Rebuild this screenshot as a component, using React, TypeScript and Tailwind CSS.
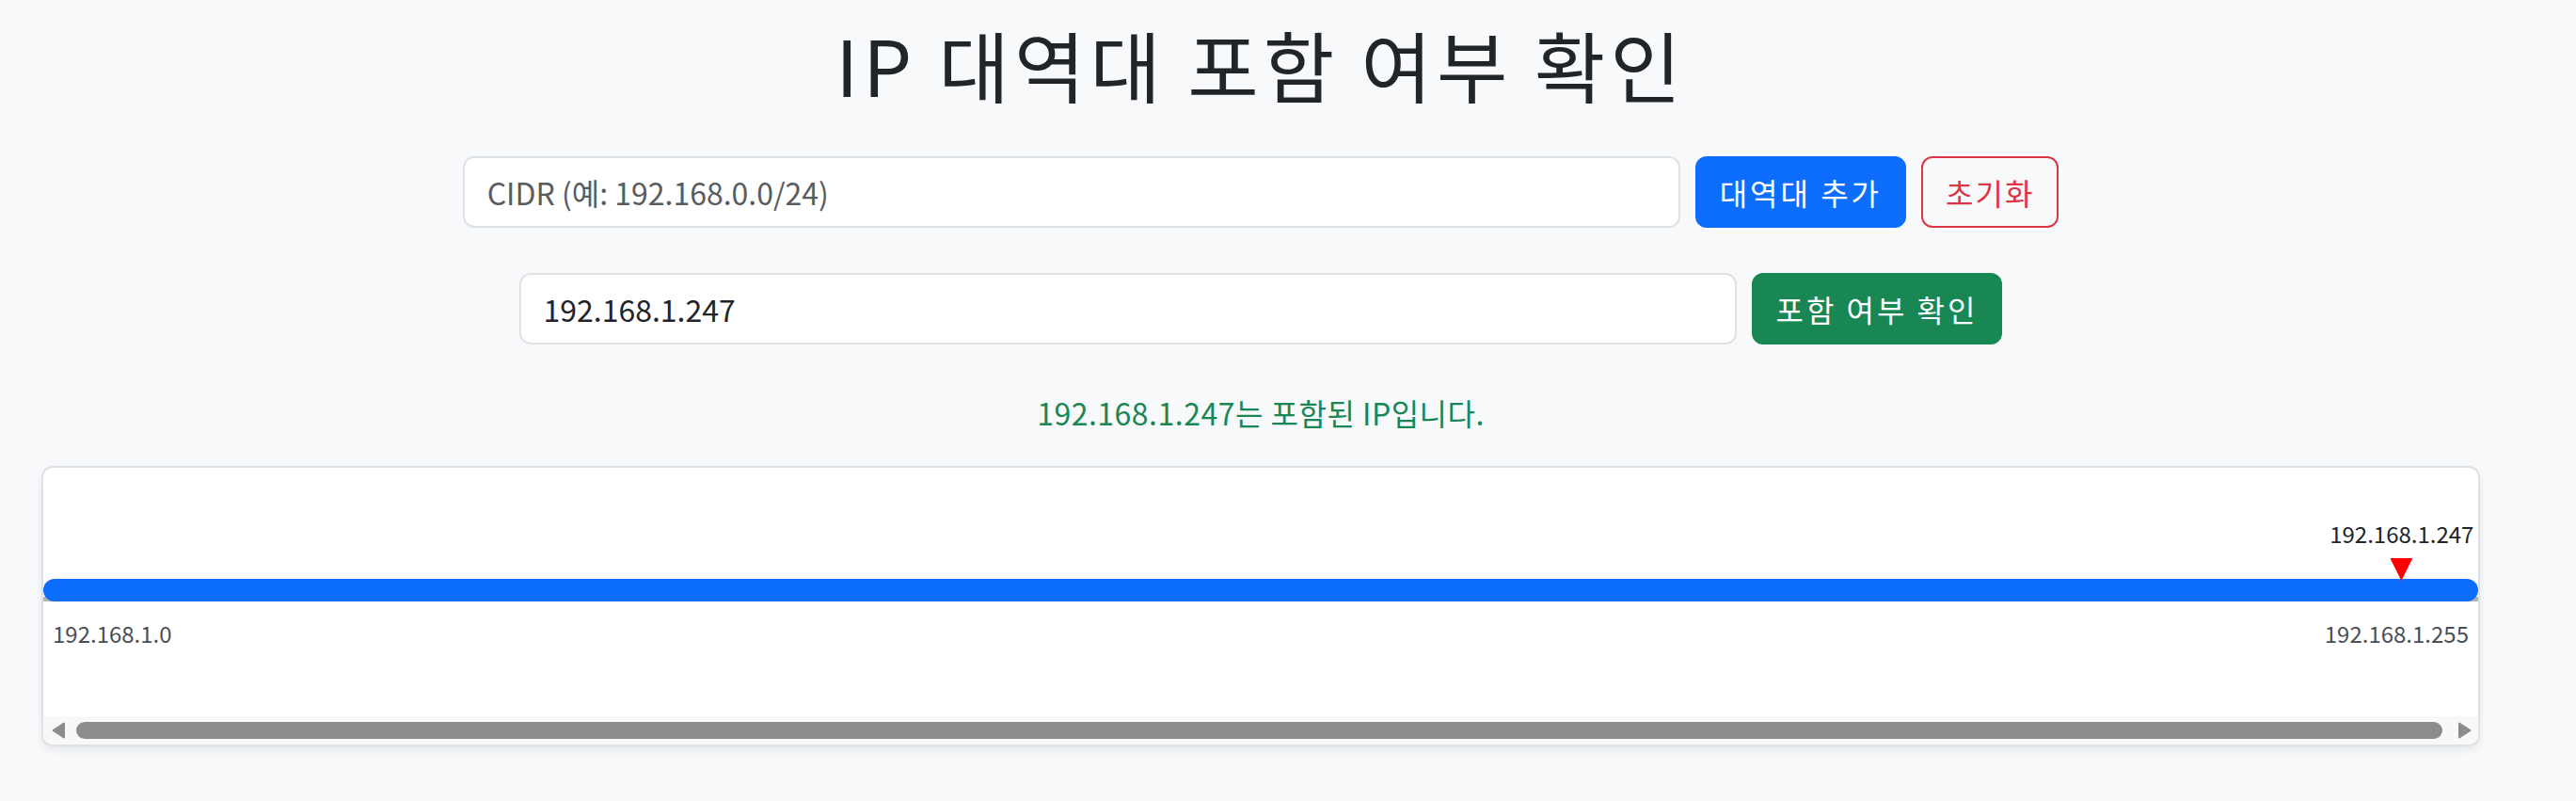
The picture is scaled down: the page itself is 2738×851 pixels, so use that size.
import { useState } from "react";

const RANGE_START = "192.168.1.0";
const RANGE_END = "192.168.1.255";
const CHECKED_IP = "192.168.1.247";

export default function App() {
  const [cidr, setCidr] = useState("");
  const [ip, setIp] = useState(CHECKED_IP);

  // position of the checked address inside the /24 range
  const lastOctet = Number(ip.split(".")[3] ?? 0);
  const pct = (lastOctet / 255) * 100;

  return (
    <div className="min-h-[851px] bg-[#f8f9fa] text-[#212529] font-['Noto_Sans_CJK_KR',sans-serif]">
      <div className="w-[2680px] px-[44px] pt-[20px]">
        <h1 className="text-center text-[82px] leading-[96px] font-normal tracking-[5px] mb-[50px]">IP 대역대 포함 여부 확인</h1>

        <div className="flex justify-center gap-4 mb-[48px]">
          <input
            value={cidr}
            onChange={(e) => setCidr(e.target.value)}
            placeholder="CIDR (예: 192.168.0.0/24)"
            className="w-[1294px] bg-white border-2 border-[#dee2e6] rounded-[12px] px-6 py-3 text-[32px] leading-[48px] outline-none placeholder:text-[#595c5f]"
          />
          <button className="bg-[#0d6efd] border-2 border-[#0d6efd] text-white rounded-[12px] px-6 py-3 text-[32px] leading-[48px] tracking-[3px]">
            대역대 추가
          </button>
          <button className="border-2 border-[#dc3545] text-[#dc3545] rounded-[12px] px-6 py-3 text-[32px] leading-[48px] tracking-[2px]">
            초기화
          </button>
        </div>

        <div className="flex justify-center gap-4 mb-[48px]">
          <input
            value={ip}
            onChange={(e) => setIp(e.target.value)}
            className="w-[1294px] bg-white border-2 border-[#dee2e6] rounded-[12px] px-6 py-3 text-[32px] leading-[48px] outline-none"
          />
          <button className="bg-[#198754] border-2 border-[#198754] text-white rounded-[12px] px-6 py-3 text-[32px] leading-[48px] tracking-[3px]">
            포함 여부 확인
          </button>
        </div>

        <p className="text-center text-[32px] leading-[48px] tracking-[0.5px] text-[#198754] mb-[33px]">{ip}는 포함된 IP입니다.</p>

        <div className="bg-white border-2 border-[#dee2e6] rounded-[12px] shadow-[0_4px_8px_rgba(0,0,0,0.075)] overflow-hidden">
          <div className="pt-[118px]">
            <div className="relative h-[24px]">
              <div className="absolute left-0 right-0 bottom-0 h-[5px] bg-[#b4b4b4]" />
              <div className="absolute inset-0 rounded-full bg-[#0d6efd]" />
              <div className="absolute bottom-[22px] -translate-x-1/2 flex flex-col items-center" style={{ left: `${pct}%` }}>
                <span className="text-[24px] leading-[32px] whitespace-nowrap">{ip}</span>
                <svg width="24" height="24" viewBox="0 0 24 24" className="mt-[10px]">
                  <path d="M0 0H24L12 24Z" fill="#ff0000" />
                </svg>
              </div>
            </div>
            <div className="flex justify-between px-[10px] mt-[18px] text-[24px] leading-[32px] text-[#4a4f55]">
              <span>{RANGE_START}</span>
              <span>{RANGE_END}</span>
            </div>
          </div>

          {/* horizontal scrollbar of the range view */}
          <div className="mt-[72px] h-[30px] bg-[#f8f8f8] flex items-center pl-[9px] pr-[7px]">
            <svg width="14" height="18" viewBox="0 0 14 18">
              <path d="M13 1.5V16.5L1.5 9Z" fill="#8c8c8c" stroke="#8c8c8c" strokeWidth="2" strokeLinejoin="round" />
            </svg>
            <div className="flex-1 h-[18px] ml-[12px] mr-[17px] rounded-full bg-[#8c8c8c]" />
            <svg width="14" height="18" viewBox="0 0 14 18">
              <path d="M1 1.5V16.5L12.5 9Z" fill="#8c8c8c" stroke="#8c8c8c" strokeWidth="2" strokeLinejoin="round" />
            </svg>
          </div>
        </div>
      </div>
    </div>
  );
}
